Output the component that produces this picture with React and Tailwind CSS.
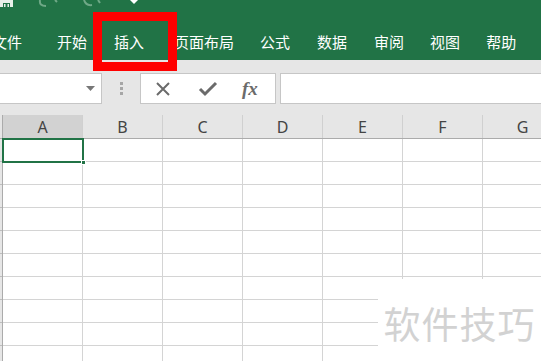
import React from 'react';

const tabs = [
  { label: '文件', cls: 'ml-[-8px]' },
  { label: '开始', cls: 'ml-[35px]' },
  { label: '插入', cls: 'ml-[27px]' },
  { label: '页面布局', cls: 'ml-[30px]' },
  { label: '公式', cls: 'ml-[26px]' },
  { label: '数据', cls: 'ml-[27px]' },
  { label: '审阅', cls: 'ml-[27px]' },
  { label: '视图', cls: 'ml-[26px]' },
  { label: '帮助', cls: 'ml-[26px]' },
];

const cols = ['A', 'B', 'C', 'D', 'E', 'F', 'G'];
const rows = Array.from({ length: 10 }, (_, i) => i + 1);

const App = () => {
  return (
    <div
      className="relative w-[541px] h-[361px] overflow-hidden bg-white select-none"
      style={{ fontFamily: '"Noto Sans CJK SC", "Noto Sans", sans-serif' }}
    >
      {/* title + ribbon tabs */}
      <div className="bg-[#217346] h-[60px] flex flex-col">
        <div className="h-[14px] flex items-start overflow-hidden">
          <svg width="14" height="10" viewBox="0 0 14 10" className="mt-[-1px]">
            <rect x="0" y="0" width="13" height="8" fill="#e8efe9" />
            <rect x="3" y="4" width="7" height="4" fill="#217346" />
            <rect x="4" y="5" width="1.5" height="3" fill="#e8efe9" />
            <rect x="7.5" y="5" width="1.5" height="3" fill="#e8efe9" />
          </svg>
          <svg width="26" height="8" viewBox="0 0 26 8" className="ml-[23px]">
            <path d="M3 0 Q2 6 9 6" stroke="#6fa887" strokeWidth="2" fill="none" />
            <path d="M18 0 L20 2" stroke="#6fa887" strokeWidth="2" fill="none" />
          </svg>
          <svg width="26" height="8" viewBox="0 0 26 8" className="ml-[15px]">
            <path d="M6 0 Q8 6 14 5" stroke="#6fa887" strokeWidth="2" fill="none" />
            <path d="M20 0 L22 3" stroke="#6fa887" strokeWidth="2" fill="none" />
          </svg>
          <svg width="10" height="6" viewBox="0 0 10 6" className="ml-[25px]">
            <path d="M1 0 L9 0 L5 4 Z" fill="#ffffff" />
          </svg>
        </div>
        <div className="flex items-center h-[46px] pt-[8px] text-white text-[15px] leading-none whitespace-nowrap">
          {tabs.map((t) => (
            <span key={t.label} className={t.cls}>{t.label}</span>
          ))}
        </div>
      </div>

      {/* formula bar */}
      <div className="bg-[#e6e6e6] h-[55px] flex items-start pt-[13px]">
        <div className="ml-[-2px] w-[104px] h-[31px] bg-white border border-[#c6c6c6] flex items-center justify-end pr-[6px]">
          <svg width="9" height="5" viewBox="0 0 9 5">
            <path d="M0 0 L9 0 L4.5 5 Z" fill="#777777" />
          </svg>
        </div>
        <div className="w-[38px] h-[31px] flex flex-col items-center justify-center gap-[2px]">
          <span className="w-[3px] h-[3px] bg-[#a6a6a6]" />
          <span className="w-[3px] h-[3px] bg-[#a6a6a6]" />
          <span className="w-[3px] h-[3px] bg-[#a6a6a6]" />
        </div>
        <div className="w-[136px] h-[31px] bg-white border border-[#c6c6c6] flex items-center">
          <svg width="18" height="18" viewBox="0 0 18 18" className="ml-[13px]">
            <path d="M3 3 L15 15 M15 3 L3 15" stroke="#6b6b6b" strokeWidth="2" />
          </svg>
          <svg width="20" height="18" viewBox="0 0 20 18" className="ml-[26px]">
            <path d="M2 9 L7 14 L18 3" stroke="#6b6b6b" strokeWidth="3" fill="none" />
          </svg>
          <span
            className="ml-[24px] text-[#6b6b6b] text-[19px] italic font-bold leading-none"
            style={{ fontFamily: '"Liberation Serif", "DejaVu Serif", serif' }}
          >
            fx
          </span>
        </div>
        <div className="ml-[4px] flex-1 h-[31px] bg-white border border-[#c6c6c6] mr-[-4px]" />
      </div>

      {/* sheet */}
      <div className="flex">
        <div className="w-[3px] shrink-0 bg-[#e6e6e6] border-r border-[#ababab] flex flex-col">
          <div className="h-[24px] border-b border-[#ababab]" />
          {rows.map((r) => (
            <div key={r} className="h-[23px] border-b border-[#bdbdbd]" />
          ))}
        </div>
        <div className="flex flex-col">
          <div className="flex h-[24px] bg-[#e6e6e6] border-b border-[#ababab]">
            {cols.map((c, i) => (
              <div
                key={c}
                className={`w-[80px] shrink-0 flex items-center justify-center text-[16px] text-[#444444] border-r border-[#d0d0d0] ${i === 0 ? 'bg-[#d2d2d2]' : ''}`}
                style={{ fontFamily: '"Noto Sans", "Liberation Sans", sans-serif' }}
              >
                {c}
              </div>
            ))}
          </div>
          {rows.map((r) => (
            <div key={r} className="flex h-[23px] border-b border-[#d4d4d4]">
              {cols.map((c) => (
                <div key={c} className="w-[80px] shrink-0 border-r border-[#d4d4d4]" />
              ))}
            </div>
          ))}
        </div>
      </div>

      {/* active cell A1 */}
      <div className="absolute left-[2px] top-[138px] w-[82px] h-[25px] border-2 border-[#217346]" />
      <div className="absolute left-[81px] top-[160px] w-[5px] h-[5px] bg-[#217346] border border-white" />

      {/* red annotation box */}
      <div className="absolute left-[93px] top-[12px] w-[84px] h-[59px] border-[9px] border-[#ff0000]" />

      {/* watermark */}
      <div className="absolute left-[378px] top-[279px] w-[163px] h-[82px] bg-white flex items-center justify-center pt-[6px]">
        <span className="text-[37px] leading-none text-[#d2d2d2] tracking-[1px]">软件技巧</span>
      </div>
    </div>
  );
};

export default App;
